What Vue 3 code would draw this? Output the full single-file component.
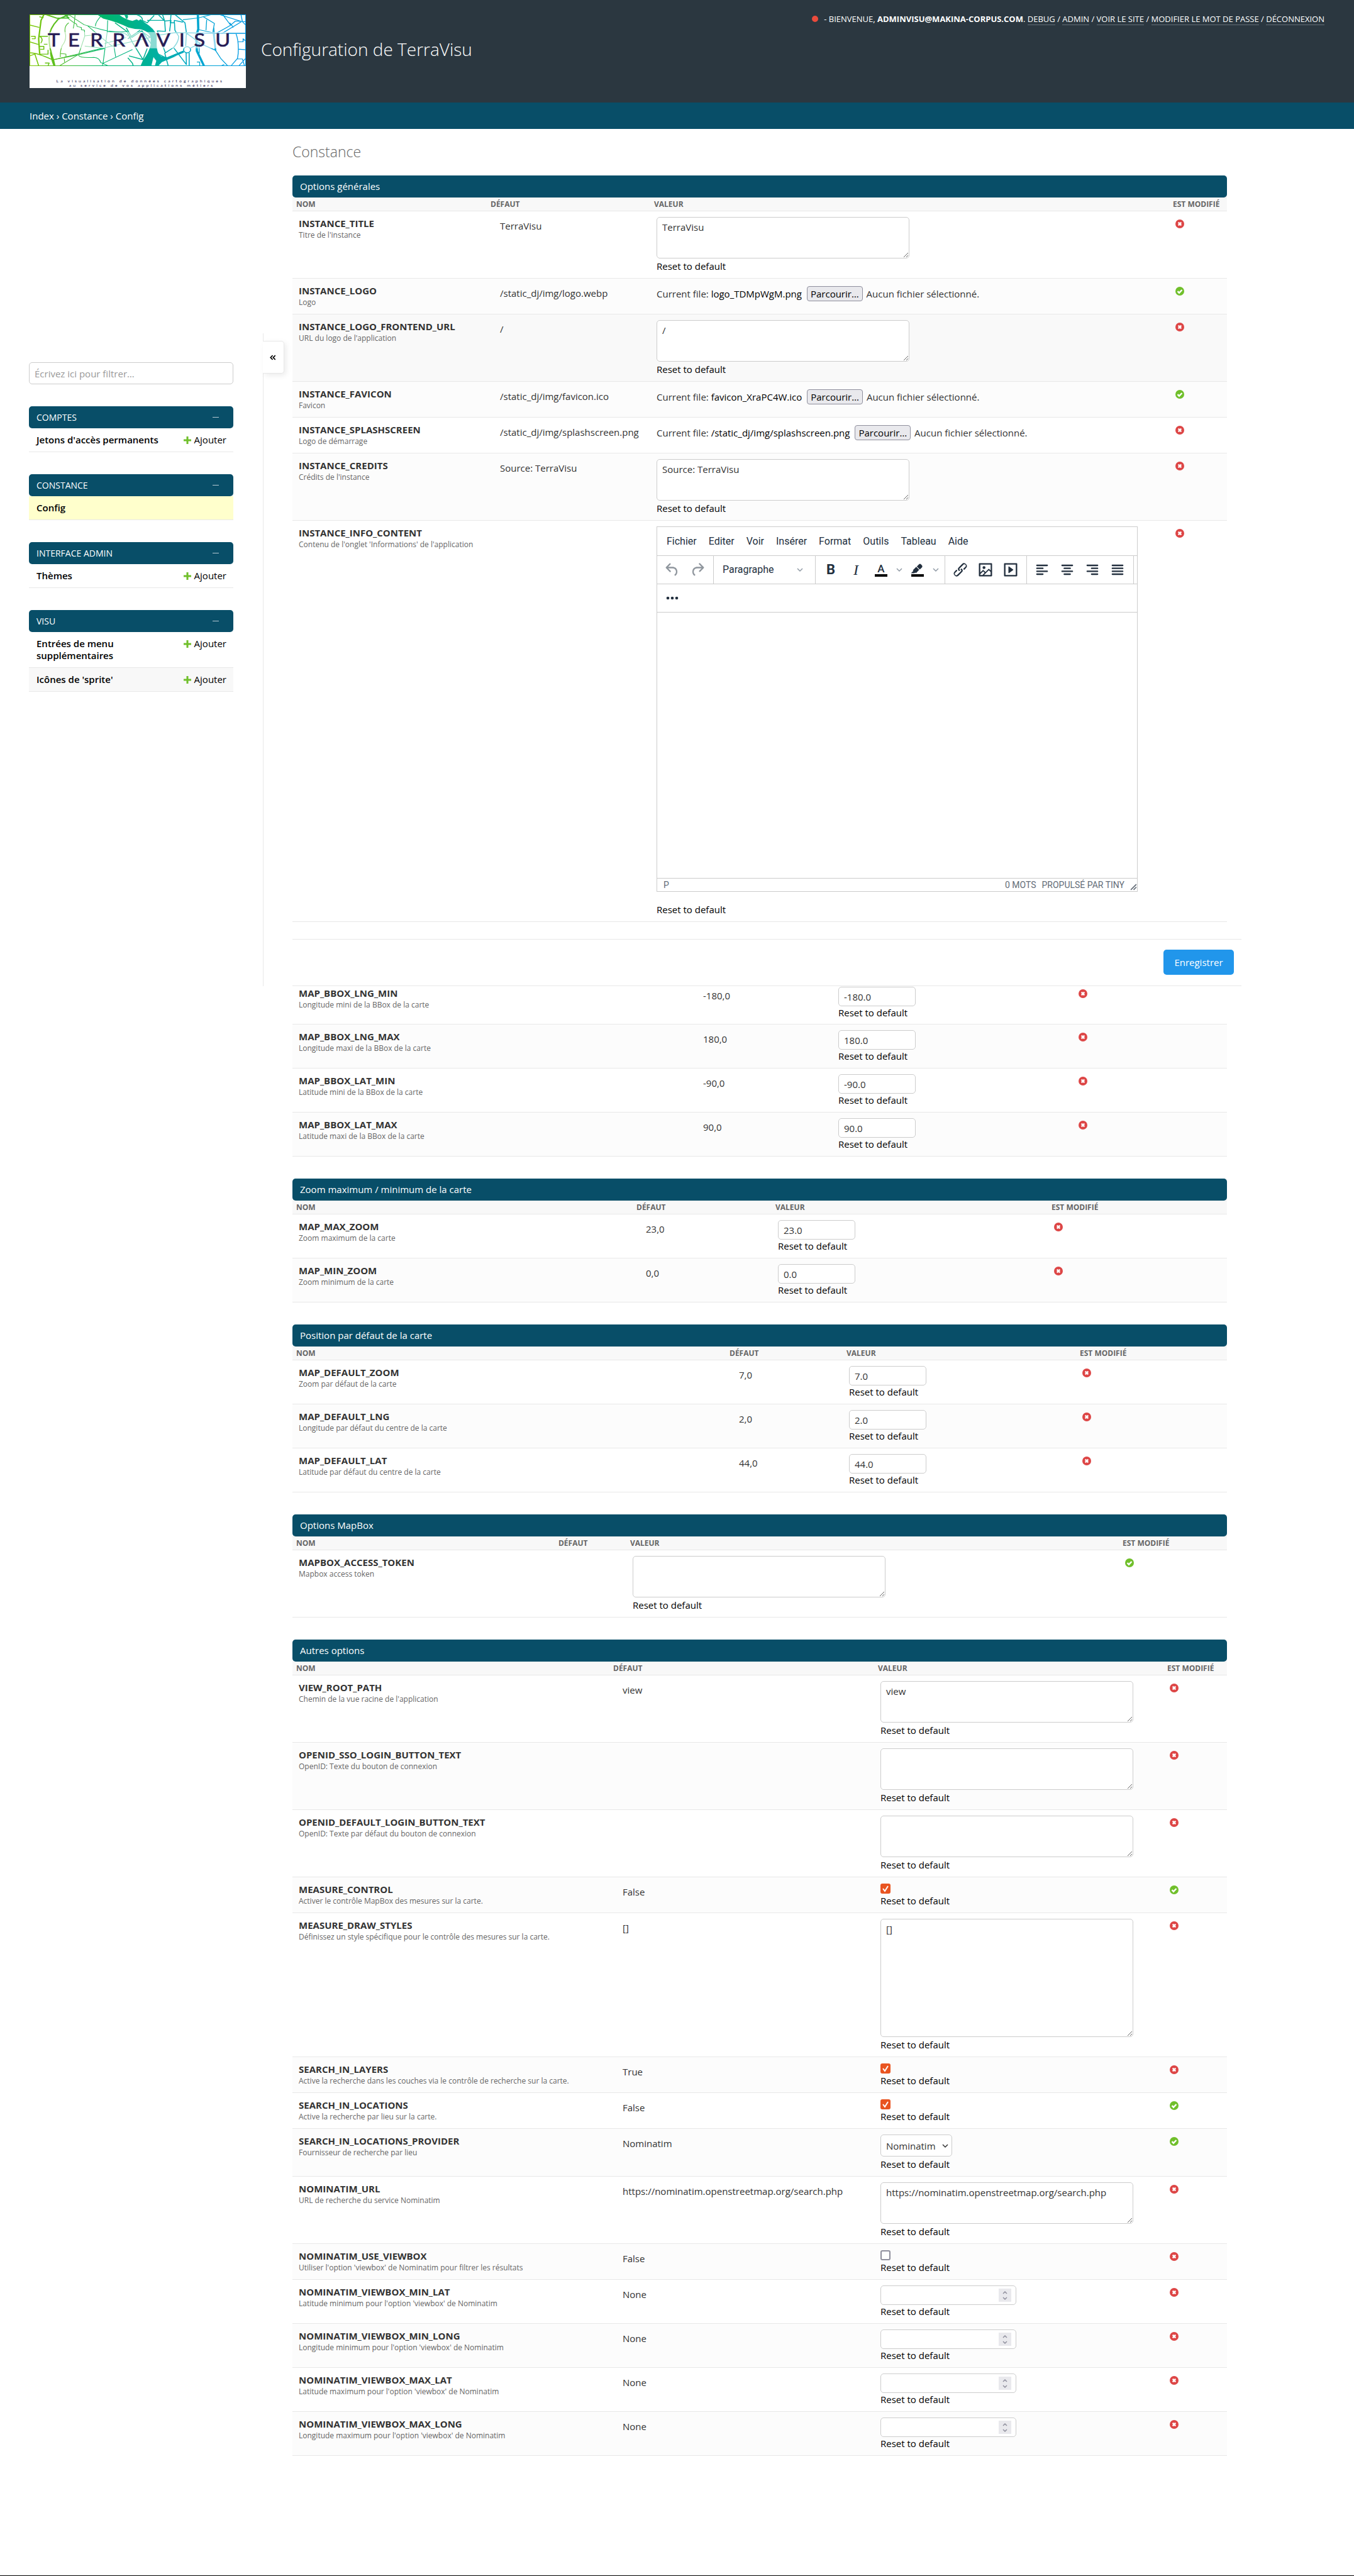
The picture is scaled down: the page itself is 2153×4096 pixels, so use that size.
<script setup>
import { ref } from 'vue'

const userLinks = ['Debug', 'Admin', 'Voir le site', 'Modifier le mot de passe', 'Déconnexion']

const letters = [
  ['T', 140], ['E', 284], ['R', 442], ['R', 602], ['Λ', 762], ['V', 916], ['I', 1078], ['S', 1184], ['U', 1336],
]

const apps = [
  { name: 'Comptes', models: [{ name: "Jetons d'accès permanents", add: true }] },
  { name: 'Constance', models: [{ name: 'Config', current: true }] },
  { name: 'Interface admin', models: [{ name: 'Thèmes', add: true }] },
  {
    name: 'Visu',
    models: [
      { name: 'Entrées de menu supplémentaires', add: true },
      { name: "Icônes de 'sprite'", add: true },
    ],
  },
]

const editorMenus = ['Fichier', 'Editer', 'Voir', 'Insérer', 'Format', 'Outils', 'Tableau', 'Aide']
const icons = {
  undo: 'M6.4 8H12c3.7 0 6.2 2 6.8 5.1.6 2.7-.4 5.6-2.3 6.8a1 1 0 0 1-1-1.8c1.1-.6 1.8-2.7 1.4-4.6-.5-2.1-2.1-3.5-4.9-3.5H6.4l3.3 3.3a1 1 0 1 1-1.4 1.4l-5-5a1 1 0 0 1 0-1.4l5-5a1 1 0 0 1 1.4 1.4L6.4 8Z',
  redo: 'M17.6 10H12c-2.8 0-4.4 1.4-4.9 3.5-.4 2 .3 4 1.4 4.6a1 1 0 1 1-1 1.8c-2-1.2-2.9-4.1-2.3-6.8.6-3 3-5.1 6.8-5.1h5.6l-3.3-3.3a1 1 0 1 1 1.4-1.4l5 5a1 1 0 0 1 0 1.4l-5 5a1 1 0 0 1-1.4-1.4l3.3-3.3Z',
  marker: 'M7.7 16.7H3l3.3-3.3-.7-.8L10.2 8l4 4.1-4 4.2c-.2.2-.6.2-.8 0l-.6-.7-1.1 1.1zm5-7.5L11 7.4l3-2.9a2 2 0 0 1 2.6 0L18 6c.7.7.7 2 0 2.7l-2.9 2.9-1.8-1.8-.5-.6',
  link: 'M6.2 12.3a1 1 0 0 1 1.4 1.4l-2 2a2 2 0 1 0 2.6 2.8l4.8-4.8a1 1 0 0 0 0-1.4 1 1 0 1 1 1.4-1.3 2.9 2.9 0 0 1 0 4L9.6 20a3.9 3.9 0 0 1-5.5-5.5l2-2Zm11.6-.6a1 1 0 0 1-1.4-1.4l2-2a2 2 0 1 0-2.6-2.8L11 10.3a1 1 0 0 0 0 1.4A1 1 0 1 1 9.6 13a2.9 2.9 0 0 1 0-4L14.4 4a3.9 3.9 0 0 1 5.5 5.5l-2 2Z',
  image: 'm5 15.7 3.3-3.2c.3-.3.7-.3 1 0L12 15l4.1-4c.3-.4.8-.4 1 0l2 1.9V5H5v10.7ZM5 18V19h3l2.8-2.9-2-2L5 17.9Zm14-3-2.5-2.4-6.4 6.5H19v-4ZM4 3h16c.6 0 1 .4 1 1v16c0 .6-.4 1-1 1H4a1 1 0 0 1-1-1V4c0-.6.4-1 1-1Zm6 8a2 2 0 1 0 0-4 2 2 0 0 0 0 4Z',
  media: 'M4 3h16c.6 0 1 .4 1 1v16c0 .6-.4 1-1 1H4a1 1 0 0 1-1-1V4c0-.6.4-1 1-1Zm1 2v14h14V5H5Zm4.8 2.6 5.6 4a.5.5 0 0 1 0 .8l-5.6 4A.5.5 0 0 1 9 16V8a.5.5 0 0 1 .8-.4Z',
}
const aligns = [
  { label: 'Aligner à gauche', d: 'M5 6h14M5 10h8M5 14h14M5 18h8' },
  { label: 'Centrer', d: 'M5 6h14M8 10h8M5 14h14M8 18h8' },
  { label: 'Aligner à droite', d: 'M5 6h14M11 10h8M5 14h14M11 18h8' },
  { label: 'Justifier', d: 'M5 6h14M5 10h14M5 14h14M5 18h14' },
]

const sections = ref([
  {
    title: 'Options générales',
    cols: [309, 260, 825, 92],
    rows: [
      { name: 'INSTANCE_TITLE', help: "Titre de l'instance", def: 'TerraVisu', kind: 'area', value: 'TerraVisu' },
      { name: 'INSTANCE_LOGO', help: 'Logo', def: '/static_dj/img/logo.webp', kind: 'file', value: 'logo_TDMpWgM.png', ok: true },
      { name: 'INSTANCE_LOGO_FRONTEND_URL', help: "URL du logo de l'application", def: '/', kind: 'area', value: '/', hover: true },
      { name: 'INSTANCE_FAVICON', help: 'Favicon', def: '/static_dj/img/favicon.ico', kind: 'file', value: 'favicon_XraPC4W.ico', ok: true },
      { name: 'INSTANCE_SPLASHSCREEN', help: 'Logo de démarrage', def: '/static_dj/img/splashscreen.png', kind: 'file', value: '/static_dj/img/splashscreen.png' },
      { name: 'INSTANCE_CREDITS', help: "Crédits de l'instance", def: 'Source: TerraVisu', kind: 'area', value: 'Source: TerraVisu' },
      { name: 'INSTANCE_INFO_CONTENT', help: "Contenu de l'onglet 'Informations' de l'application", def: '', kind: 'editor' },
    ],
  },
  {
    title: '',
    cols: [632, 226, 382, 246],
    rows: [
      { name: 'MAP_BBOX_LNG_MIN', help: 'Longitude mini de la BBox de la carte', def: '-180,0', kind: 'text', value: '-180.0' },
      { name: 'MAP_BBOX_LNG_MAX', help: 'Longitude maxi de la BBox de la carte', def: '180,0', kind: 'text', value: '180.0' },
      { name: 'MAP_BBOX_LAT_MIN', help: 'Latitude mini de la BBox de la carte', def: '-90,0', kind: 'text', value: '-90.0' },
      { name: 'MAP_BBOX_LAT_MAX', help: 'Latitude maxi de la BBox de la carte', def: '90,0', kind: 'text', value: '90.0' },
    ],
  },
  {
    title: 'Zoom maximum / minimum de la carte',
    cols: [541, 221, 439, 285],
    rows: [
      { name: 'MAP_MAX_ZOOM', help: 'Zoom maximum de la carte', def: '23,0', kind: 'text', value: '23.0' },
      { name: 'MAP_MIN_ZOOM', help: 'Zoom minimum de la carte', def: '0,0', kind: 'text', value: '0.0' },
    ],
  },
  {
    title: 'Position par défaut de la carte',
    cols: [689, 186, 371, 240],
    rows: [
      { name: 'MAP_DEFAULT_ZOOM', help: 'Zoom par défaut de la carte', def: '7,0', kind: 'text', value: '7.0' },
      { name: 'MAP_DEFAULT_LNG', help: 'Longitude par défaut du centre de la carte', def: '2,0', kind: 'text', value: '2.0' },
      { name: 'MAP_DEFAULT_LAT', help: 'Latitude par défaut du centre de la carte', def: '44,0', kind: 'text', value: '44.0' },
    ],
  },
  {
    title: 'Options MapBox',
    cols: [417, 114, 783, 172],
    rows: [
      { name: 'MAPBOX_ACCESS_TOKEN', help: 'Mapbox access token', def: '', kind: 'area', value: '', ok: true },
    ],
  },
  {
    title: 'Autres options',
    cols: [504, 421, 460, 101],
    rows: [
      { name: 'VIEW_ROOT_PATH', help: "Chemin de la vue racine de l'application", def: 'view', kind: 'area', value: 'view' },
      { name: 'OPENID_SSO_LOGIN_BUTTON_TEXT', help: 'OpenID: Texte du bouton de connexion', def: '', kind: 'area', value: '' },
      { name: 'OPENID_DEFAULT_LOGIN_BUTTON_TEXT', help: 'OpenID: Texte par défaut du bouton de connexion', def: '', kind: 'area', value: '' },
      { name: 'MEASURE_CONTROL', help: 'Activer le contrôle MapBox des mesures sur la carte.', def: 'False', kind: 'check', value: true, ok: true },
      { name: 'MEASURE_DRAW_STYLES', help: 'Définissez un style spécifique pour le contrôle des mesures sur la carte.', def: '[]', kind: 'area', value: '[]', tall: true },
      { name: 'SEARCH_IN_LAYERS', help: 'Active la recherche dans les couches via le contrôle de recherche sur la carte.', def: 'True', kind: 'check', value: true },
      { name: 'SEARCH_IN_LOCATIONS', help: 'Active la recherche par lieu sur la carte.', def: 'False', kind: 'check', value: true, ok: true },
      { name: 'SEARCH_IN_LOCATIONS_PROVIDER', help: 'Fournisseur de recherche par lieu', def: 'Nominatim', kind: 'select', value: 'Nominatim', ok: true },
      { name: 'NOMINATIM_URL', help: 'URL de recherche du service Nominatim', def: 'https://nominatim.openstreetmap.org/search.php', kind: 'area', value: 'https://nominatim.openstreetmap.org/search.php' },
      { name: 'NOMINATIM_USE_VIEWBOX', help: "Utiliser l'option 'viewbox' de Nominatim pour filtrer les résultats", def: 'False', kind: 'check', value: false },
      { name: 'NOMINATIM_VIEWBOX_MIN_LAT', help: "Latitude minimum pour l'option 'viewbox' de Nominatim", def: 'None', kind: 'number', value: '' },
      { name: 'NOMINATIM_VIEWBOX_MIN_LONG', help: "Longitude minimum pour l'option 'viewbox' de Nominatim", def: 'None', kind: 'number', value: '' },
      { name: 'NOMINATIM_VIEWBOX_MAX_LAT', help: "Latitude maximum pour l'option 'viewbox' de Nominatim", def: 'None', kind: 'number', value: '' },
      { name: 'NOMINATIM_VIEWBOX_MAX_LONG', help: "Longitude maximum pour l'option 'viewbox' de Nominatim", def: 'None', kind: 'number', value: '' },
    ],
  },
])

const colWidth = (cols, w) => (w / cols.reduce((a, b) => a + b, 0)) * 100 + '%'
</script>

<template>
  <div class="page">
    <header class="top">
      <a href="#" class="logo" aria-label="TerraVisu">
        <svg viewBox="10 12 1545 600" preserveAspectRatio="none">
          <defs>
            <linearGradient id="terra" gradientUnits="userSpaceOnUse" x1="10" y1="0" x2="1555" y2="0">
              <stop offset="0" stop-color="#7cc800" />
              <stop offset=".12" stop-color="#5cbf20" />
              <stop offset=".33" stop-color="#00b66a" />
              <stop offset=".58" stop-color="#00b0a0" />
              <stop offset=".78" stop-color="#00a6d0" />
              <stop offset="1" stop-color="#0098e6" />
            </linearGradient>
          </defs>
          <rect x="10" y="12" width="1545" height="600" fill="#fff" />
          <g fill="none" stroke="url(#terra)" stroke-width="5" stroke-linejoin="round">
            <rect x="12" y="14" width="1541" height="416" />
            <path stroke-width="10" d="M290 14L215 50Q150 130 150 200Q148 280 180 380L190 430M112 14L92 60L75 210L82 330M160 320Q165 370 185 430M262 14L290 40L205 42L130 14" />
            <path stroke-width="7" d="M10 98L80 118M10 235L72 256M10 325Q60 322 175 382L360 340L545 290M10 350L48 335L75 430M80 190H142M84 190Q112 215 90 246M80 272H112V296H86M84 318L82 336H142V300M112 255H138M20 190H50V210H26M120 408H150L142 430M80 30L110 40" />
            <path d="M290 80Q250 110 268 180Q270 230 245 262Q228 300 230 360M280 40L325 78L345 90L350 110L380 118V136L402 140L404 190L372 300L360 340M335 14L330 80L322 126M290 14L400 96L528 136Q610 160 704 152M404 186L460 180M404 270L480 280L545 290M360 345Q370 368 470 362Q510 366 518 404L532 410M530 14Q480 70 480 108M568 60L565 150L536 400L530 430M425 105L560 235L600 270M566 155Q700 150 712 190M545 250L640 220L700 200M610 250L625 358M480 300L870 200M230 330L270 335V360M225 430L350 345M535 410L745 298M180 382L480 300M260 400L258 370M530 410L570 430" />
            <path stroke-width="7" d="M620 80L705 150L745 240L820 380M700 120L740 200L812 145L930 335L995 372M800 140L712 210M690 14L705 45M775 14Q820 30 815 60L850 80L900 20M720 350L820 380L850 290M712 365L745 410L750 430M812 150L875 200M850 60L975 60M930 14L975 66L980 150L922 146L935 180L1050 160L1340 166L1555 166M960 14L975 66L1020 60L1010 150M1020 14L1015 80H1044V60L1105 75M1050 14L1120 80L1130 160L1125 270M1045 80L1048 140L1075 190Q1076 230 1040 280L980 325L930 170M1125 160L1180 205L1230 250L1340 305L1325 120M1040 285L1130 420L1128 325M1150 325V430M975 325L1000 430M930 395L1110 310M1160 285L1225 250" />
            <path stroke-width="16" d="M1212 14L1215 130L1200 190L1205 310L1255 430M930 400L1110 315" />
            <path stroke-width="6" d="M1105 55L1215 40L1305 14M1250 30L1330 85L1320 150L1335 300L1375 370L1425 430M1275 55L1270 140M1215 135L1340 166Q1385 140 1445 100L1480 66L1555 70M1370 14L1525 70L1380 170M1445 98L1390 14M1440 80L1465 118M1520 14L1530 70L1555 100M1485 170Q1505 230 1500 330L1495 370L1450 430M1495 235H1535V210L1555 230M1500 295L1555 300M1490 375H1530L1545 430M1505 430L1555 368M1220 250L1222 330M1205 400H1225V430M1380 430L1400 420" />
            <circle cx="1135" cy="300" r="25" stroke-width="7" />
          </g>
          <path fill="url(#terra)" d="M495 14H650Q690 50 745 65L775 52L790 62L802 50L835 80Q905 130 918 185V260Q918 330 948 352Q1000 370 1060 350L955 400L930 430H905L915 390L895 360L880 430H803L820 385Q860 330 875 260V205Q870 150 800 132L762 130L715 118Q640 75 535 45Z" />
          <ellipse cx="704" cy="30" rx="9" ry="16" fill="url(#terra)" />
          <rect x="140" y="155" width="1290" height="133" fill="#fff" fill-opacity=".55" />
          <text v-for="(l, i) in letters" :key="i" :x="l[1]" y="274" class="mark">{{ l[0] }}</text>
          <text x="800" y="564" class="tag">La visualisation de données cartographiques</text>
          <text x="812" y="603" class="tag">au service de vos applications métiers</text>
        </svg>
      </a>
      <h1 class="site">Configuration de TerraVisu</h1>
      <div class="tools">
        <span class="dot"></span>
        <span>- Bienvenue, <strong>adminvisu@makina-corpus.com</strong>.
          <template v-for="(l, i) in userLinks" :key="l"><template v-if="i"> / </template><a href="#">{{ l }}</a></template>
        </span>
      </div>
    </header>

    <nav class="crumbs" aria-label="Fil d'Ariane">
      <a href="#">Index</a> › <a href="#">Constance</a> › <a href="#">Config</a>
    </nav>

    <div class="body">
      <aside class="side">
        <button type="button" class="toggle" aria-label="Replier la navigation">
          <svg viewBox="0 0 12 10"><path d="M5.500 1L1.500 5l4 4M10.500 1L6.500 5l4 4" /></svg>
        </button>
        <input class="filter" type="search" placeholder="Écrivez ici pour filtrer…" aria-label="Filtrer les éléments de navigation" />
        <section v-for="a in apps" :key="a.name" class="app">
          <h2>{{ a.name }}<i></i></h2>
          <div v-for="(m, i) in a.models" :key="m.name" class="model" :class="{ current: m.current, even: i % 2 }">
            <a href="#" class="mname">{{ m.name }}</a>
            <a v-if="m.add" href="#" class="add"><svg viewBox="0 0 12 12"><path d="M6 0v12M0 6h12" /></svg>Ajouter</a>
          </div>
        </section>
      </aside>

      <main class="main">
        <h2 class="heading">Constance</h2>
        <form @submit.prevent>
          <template v-for="(s, si) in sections" :key="si">
            <div v-if="!s.title" class="save"><button type="submit">Enregistrer</button></div>
            <section class="module">
              <h3 v-if="s.title">{{ s.title }}</h3>
              <table :class="{ cut: !s.title }">
                <colgroup>
                  <col v-for="(w, i) in s.cols" :key="i" :style="{ width: colWidth(s.cols, w) }" />
                </colgroup>
                <thead v-if="s.title">
                  <tr><th scope="col">Nom</th><th scope="col">Défaut</th><th scope="col">Valeur</th><th scope="col">Est modifié</th></tr>
                </thead>
                <tbody>
                  <tr v-for="r in s.rows" :key="r.name" :class="{ hover: r.hover }">
                    <th scope="row">
                      <label :for="r.name">{{ r.name }}</label>
                      <div class="help">{{ r.help }}</div>
                    </th>
                    <td class="def">{{ r.def }}</td>
                    <td class="val">
                      <template v-if="r.kind === 'area'">
                        <textarea :id="r.name" v-model="r.value" :class="{ tall: r.tall }"></textarea>
                      </template>
                      <div v-else-if="r.kind === 'file'" class="file">
                        <span>Current file: <a href="#">{{ r.value }}</a></span>
                        <button :id="r.name" type="button">Parcourir…</button>
                        <span>Aucun fichier sélectionné.</span>
                      </div>
                      <input v-else-if="r.kind === 'text'" :id="r.name" v-model="r.value" type="text" />
                      <input v-else-if="r.kind === 'check'" :id="r.name" v-model="r.value" type="checkbox" />
                      <div v-else-if="r.kind === 'number'" class="number">
                        <input :id="r.name" v-model="r.value" type="number" />
                        <span class="spin"><svg viewBox="0 0 8 16"><path d="M1 5l3-3 3 3M1 11l3 3 3-3" /></svg></span>
                      </div>
                      <div v-else-if="r.kind === 'select'" class="select">
                        <select :id="r.name" v-model="r.value"><option>Nominatim</option></select>
                        <svg viewBox="0 0 10 8"><path d="M1 2l4 4 4-4" /></svg>
                      </div>
                      <div v-else class="editor">
                        <div class="menus">
                          <button v-for="m in editorMenus" :key="m" type="button">{{ m }}</button>
                        </div>
                        <div class="bar">
                          <div class="group off">
                            <button type="button" aria-label="Annuler"><svg class="ic" viewBox="0 0 24 24"><path :d="icons.undo" /></svg></button>
                            <button type="button" aria-label="Rétablir"><svg class="ic" viewBox="0 0 24 24"><path :d="icons.redo" /></svg></button>
                          </div>
                          <div class="group">
                            <button type="button" class="block">Paragraphe<svg class="chev" viewBox="0 0 10 10"><path d="M1 3l4 4 4-4" /></svg></button>
                          </div>
                          <div class="group">
                            <button type="button" class="bold">B</button>
                            <button type="button" class="ital">I</button>
                            <button type="button" class="color">A<i></i></button>
                            <button type="button" class="split" aria-label="Couleurs du texte"><svg class="chev" viewBox="0 0 10 10"><path d="M1 3l4 4 4-4" /></svg></button>
                            <button type="button" class="color" aria-label="Surligner"><svg class="ic" viewBox="0 0 24 24"><path :d="icons.marker" fill-rule="evenodd" /></svg><i></i></button>
                            <button type="button" class="split" aria-label="Couleurs du fond"><svg class="chev" viewBox="0 0 10 10"><path d="M1 3l4 4 4-4" /></svg></button>
                          </div>
                          <div class="group">
                            <button v-for="k in ['link', 'image', 'media']" :key="k" type="button" :aria-label="k"><svg class="ic" viewBox="0 0 24 24"><path :d="icons[k]" fill-rule="evenodd" /></svg></button>
                          </div>
                          <div class="group">
                            <button v-for="a in aligns" :key="a.label" type="button" :aria-label="a.label"><svg class="ic line" viewBox="0 0 24 24"><path :d="a.d" /></svg></button>
                          </div>
                        </div>
                        <div class="bar">
                          <div class="group last">
                            <button type="button" aria-label="Plus"><svg class="ic" viewBox="0 0 24 24"><circle cx="6" cy="12" r="2" /><circle cx="12" cy="12" r="2" /><circle cx="18" cy="12" r="2" /></svg></button>
                          </div>
                        </div>
                        <div :id="r.name" class="doc" contenteditable="true"></div>
                        <div class="status">
                          <span>P</span>
                          <span class="count">0 mots</span>
                          <span>Propulsé par Tiny</span>
                          <svg viewBox="0 0 10 10"><path d="M1 9l8-8M5 9l4-4" /></svg>
                        </div>
                      </div>
                      <a v-if="r.kind !== 'file'" href="#" class="reset">Reset to default</a>
                    </td>
                    <td class="mod">
                      <svg viewBox="0 0 14 14" role="img" :aria-label="r.ok ? 'Oui' : 'Non'">
                        <circle cx="7" cy="7" r="7" :fill="r.ok ? '#70bf2b' : '#dd4646'" />
                        <path :d="r.ok ? 'M3.500 7.200l2.500 2.500 4.500-4.700' : 'M4.700 4.700l4.600 4.600M9.300 4.700l-4.600 4.600'" />
                      </svg>
                    </td>
                  </tr>
                </tbody>
              </table>
            </section>
          </template>
        </form>
      </main>
    </div>
  </div>
</template>

<style>
body {
  margin: 0;
  background: #fff;
}
</style>

<style scoped>
.page {
  box-sizing: border-box;
  min-height: 100vh;
  border-bottom: 1px solid #000;
  font: 15px/20px "Open Sans", "Noto Sans", sans-serif;
  color: #333;
}
.page *,
.page *::before {
  box-sizing: border-box;
}
a {
  color: #000;
  text-decoration: none;
}
h1,
h2,
h3 {
  margin: 0;
  font-weight: 400;
}
button,
input,
select,
textarea {
  font: inherit;
  color: #333;
  margin: 0;
}
svg {
  display: block;
}

.top {
  display: flex;
  height: 163px;
  padding: 20px 47px 0;
  background: #2b3740;
  color: #fff;
}
.logo {
  width: 344px;
  height: 117px;
  margin-top: 3px;
}
.logo svg {
  width: 344px;
  height: 117px;
}
.mark {
  font: 400 146px Lato, sans-serif;
  fill: #271c55;
  stroke: #271c55;
  stroke-width: 3px;
}
.tag {
  font: 400 31px Lato, sans-serif;
  letter-spacing: 14px;
  text-anchor: middle;
  fill: #271c55;
}
.site {
  margin: 38px 0 0 24px;
  font-size: 28px;
  line-height: 40px;
  font-weight: 300;
}
.tools {
  display: flex;
  align-items: center;
  gap: 9px;
  height: 20px;
  margin-left: auto;
  font-size: 13px;
  text-transform: uppercase;
}
.tools strong {
  font-weight: 700;
}
.tools a {
  color: #fff;
  border-bottom: 1px solid #646e78;
}
.dot {
  width: 10px;
  height: 10px;
  border-radius: 50%;
  background: #eb4b3c;
}
.crumbs {
  padding: 0 47px;
  background: #084e68;
  color: #fff;
  line-height: 42px;
}
.crumbs a {
  color: #fff;
}

.body {
  display: flex;
  align-items: flex-start;
}
.side {
  position: relative;
  flex: none;
  width: 419px;
  min-height: 1038px;
  margin-top: 325px;
  padding: 46px 47px 0 46px;
  border-right: 1px solid #e8e8e8;
}
.toggle {
  position: absolute;
  top: 12px;
  left: 418px;
  display: grid;
  place-items: center;
  width: 34px;
  height: 52px;
  padding: 0 2px 0 0;
  border: 1px solid #e8e8e8;
  border-left: 0;
  border-radius: 0 5px 5px 0;
  background: #fff;
  box-shadow: 3px 3px 8px rgba(0, 0, 0, 0.08);
}
.toggle svg {
  width: 10px;
  height: 9px;
  fill: none;
  stroke: #000;
  stroke-width: 2;
}
.filter {
  display: block;
  width: 100%;
  height: 35px;
  padding: 0 8px;
  border: 1px solid #ccc;
  border-radius: 5px;
  background: #fff;
}
.filter::placeholder {
  color: #999;
}
.app {
  margin-top: 35px;
}
.app h2 {
  display: flex;
  align-items: center;
  justify-content: space-between;
  padding: 0 23px 0 12px;
  border-radius: 5px;
  background: #084e68;
  color: #fff;
  font-size: 14px;
  line-height: 35px;
  text-transform: uppercase;
}
.app h2 i {
  width: 10px;
  height: 1px;
  background: #b4c8d2;
}
.model {
  display: flex;
  justify-content: space-between;
  padding: 9px 11px 9px 12px;
  border-bottom: 1px solid #e8e8e8;
  line-height: 19px;
}
.model.current {
  background: #ffffcc;
}
.model.even {
  background: #f8f8f8;
}
.mname {
  max-width: 210px;
  font-weight: 600;
}
.app:last-child .mname {
  max-width: 160px;
}
.add {
  display: flex;
  align-items: center;
  gap: 5px;
  height: 19px;
}
.add svg {
  width: 12px;
  height: 12px;
  stroke: #70bf2b;
  stroke-width: 3;
}

.main {
  flex: 1;
  min-width: 0;
  padding: 23px 202px 190px 46px;
}
.heading {
  margin-bottom: 24px;
  color: #666;
  font-size: 23px;
  line-height: 27px;
  font-weight: 300;
}
.module {
  margin-bottom: 35px;
}
.module:last-child {
  margin-bottom: 0;
}
.module h3 {
  padding: 0 12px;
  border-radius: 5px;
  background: #084e68;
  color: #fff;
  font-size: 15px;
  line-height: 35px;
}
table {
  width: 100%;
  table-layout: fixed;
  border-collapse: separate;
  border-spacing: 0;
}
th,
td {
  padding: 9px 10px;
  text-align: left;
  vertical-align: top;
  font-weight: 400;
  border-bottom: 1px solid #e8e8e8;
}
thead th {
  padding: 0 6px;
  border-top: 1px solid #eee;
  background: #f8f8f8;
  color: #666;
  font-size: 12px;
  font-weight: 700;
  line-height: 20px;
  text-transform: uppercase;
}
tbody tr:nth-child(even) {
  background: #fcfcfc;
}
tbody tr.hover {
  background: #f9f9f9;
}
tbody th label {
  display: block;
  font-weight: 700;
}
.help {
  color: #666;
  font-size: 12px;
  line-height: 18px;
}
.def {
  padding: 13px 0 0 21px;
}
.mod {
  padding: 13px 10px 0;
}
.mod svg {
  width: 14px;
  height: 14px;
}
.mod path {
  fill: none;
  stroke: #fff;
  stroke-width: 2.400;
}
.cut tr:first-child th,
.cut tr:first-child .val {
  padding-top: 1px;
  padding-bottom: 8px;
}
.cut tr:first-child .def,
.cut tr:first-child .mod {
  padding-top: 5px;
}

textarea,
input[type='text'],
input[type='number'],
select {
  display: block;
  border: 1px solid #ccc;
  border-radius: 5px;
  background: #fff;
}
textarea {
  width: 402px;
  height: 66px;
  margin-bottom: 2px;
  padding: 5px 8px;
  resize: both;
}
textarea.tall {
  height: 188px;
}
input[type='text'] {
  width: 123px;
  height: 31px;
  padding: 0 8px;
}
.number {
  position: relative;
  width: 216px;
}
.number input {
  width: 100%;
  height: 31px;
  padding: 0 32px 0 8px;
  appearance: textfield;
}
.spin {
  position: absolute;
  top: 5px;
  right: 8px;
  display: grid;
  place-items: center;
  width: 20px;
  height: 21px;
  background: #e9e9ed;
}
.spin svg,
.select svg {
  fill: none;
  stroke: #8f8f9d;
  stroke-width: 1.500;
}
.spin svg {
  width: 8px;
  height: 16px;
}
.select {
  position: relative;
  width: 114px;
  margin-bottom: 2px;
}
.select select {
  width: 100%;
  height: 35px;
  padding: 0 8px;
  appearance: none;
}
.select svg {
  position: absolute;
  top: 14px;
  right: 6px;
  width: 10px;
  height: 8px;
  stroke: #333;
}
input[type='checkbox'] {
  appearance: none;
  display: block;
  width: 16px;
  height: 16px;
  margin: 1px 0;
  border: 2px solid #8f8f9d;
  border-radius: 3px;
  background: #fff;
}
input[type='checkbox']:checked {
  border: 0;
  background: #e95420 url("data:image/svg+xml,%3Csvg xmlns='http://www.w3.org/2000/svg' viewBox='0 0 16 16'%3E%3Cpath d='M4 8l3 4 5-8' fill='none' stroke='%23fff' stroke-width='2'/%3E%3C/svg%3E") center / 16px;
}
.reset {
  display: block;
  width: max-content;
  line-height: 20px;
}
.file {
  display: flex;
  align-items: center;
  height: 30px;
  white-space: nowrap;
}
.file button {
  height: 24px;
  margin: 0 6px 0 8px;
  padding: 0 5px;
  border: 1px solid #8f8f9d;
  border-radius: 4px;
  background: #e9e9ed;
  color: #000;
  line-height: 20px;
}

.editor {
  width: 765px;
  margin-bottom: 18px;
  border: 1px solid #ccc;
  background: #fff;
  color: #222f3e;
  font-family: Roboto, sans-serif;
}
.editor button {
  padding: 0;
  border: 0;
  background: none;
  color: #222f3e;
}
.menus {
  display: flex;
  gap: 19px;
  height: 46px;
  padding: 0 15px;
  border-bottom: 1px solid #ccc;
  font-size: 16px;
}
.bar {
  display: flex;
  height: 45px;
  border-bottom: 1px solid #ccc;
}
.group {
  display: flex;
  align-items: center;
  padding: 0 5px 0 4px;
  border-right: 1px solid #ccc;
}
.group.last {
  border: 0;
}
.group button {
  display: grid;
  place-items: center;
  width: 40px;
  height: 40px;
}
.group .split {
  width: 18px;
}
.group .block {
  display: flex;
  align-items: center;
  justify-content: space-between;
  width: 152px;
  padding: 0 14px 0 10px;
  font-size: 16px;
}
.ic {
  width: 28px;
  height: 28px;
  fill: #222f3e;
}
.ic.line {
  fill: none;
  stroke: #222f3e;
  stroke-width: 2;
  stroke-linecap: round;
}
.off .ic {
  opacity: 0.5;
}
.chev {
  width: 10px;
  height: 10px;
  fill: none;
  stroke: #909aa5;
  stroke-width: 1.500;
}
.bold {
  font-size: 22px;
  font-weight: 700;
}
.ital {
  font-family: "Liberation Serif", serif;
  font-size: 24px;
  font-style: italic;
}
.color {
  position: relative;
  font-size: 17px;
  font-weight: 500;
}
.group .color {
  padding-bottom: 4px;
}
.group .color svg {
  margin-top: 4px;
}
.color i {
  position: absolute;
  left: 10px;
  bottom: 9px;
  width: 20px;
  height: 4px;
  background: #000;
}
.doc {
  height: 422px;
}
.status {
  display: flex;
  align-items: center;
  gap: 9px;
  height: 21px;
  padding-left: 10px;
  border-top: 1px solid #ccc;
  color: #646d78;
  font-size: 14px;
  text-transform: uppercase;
}
.count {
  margin-left: auto;
}
.status svg {
  width: 11px;
  height: 11px;
  margin-top: 6px;
  stroke: #646d78;
  stroke-width: 1.500;
}

.save {
  display: flex;
  justify-content: flex-end;
  margin: -8px -23px 0 0;
  padding: 16px 12px 17px 0;
  border: solid #e8e8e8;
  border-width: 1px 0;
  background: #fff;
}
.save button {
  width: 112px;
  height: 40px;
  border: 0;
  border-radius: 5px;
  background: #2196eb;
  color: #fff;
}
</style>
